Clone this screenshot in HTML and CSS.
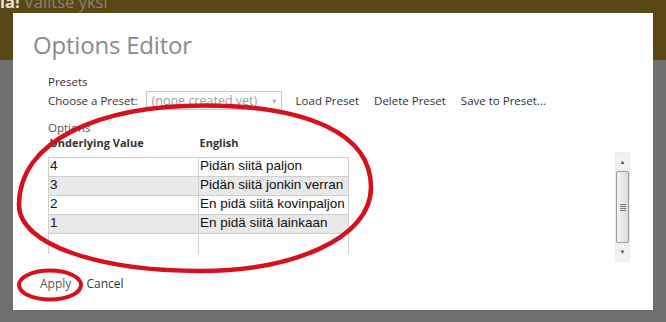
FILE: index.html
```html
<!DOCTYPE html>
<html lang="en">
<head>
  <meta charset="UTF-8" />
  <title>Options Editor</title>
  <link rel="stylesheet" href="styles.css">
</head>
<body>
  <div class="topbar">
    <span class="crumb"><b>ia!</b> Valitse yksi</span>
  </div>

  <!-- modal dialog -->
  <div class="modal">
    <h1>Options Editor</h1>

    <div class="section">
      <div class="label">Presets</div>
      <div class="preset-row">
        <span>Choose a Preset:</span>
        <div class="fake-select">
          <span>(none created yet)</span>
          <span class="caret">&#9662;</span>
        </div>
        <a class="preset-link load">Load Preset</a>
        <a class="preset-link">Delete Preset</a>
        <a class="preset-link">Save to Preset...</a>
      </div>

      <div class="label options-label">Options</div>
      <div class="grid-wrap">
        <table class="opt-table">
          <thead>
            <tr><th>Underlying Value</th><th>English</th></tr>
          </thead>
          <tbody>
            <tr><td>4</td><td>Pidän siitä paljon</td></tr>
            <tr class="alt"><td>3</td><td>Pidän siitä jonkin verran</td></tr>
            <tr><td>2</td><td>En pidä siitä kovinpaljon</td></tr>
            <tr class="alt"><td>1</td><td>En pidä siitä lainkaan</td></tr>
            <tr class="blank"><td></td><td></td></tr>
          </tbody>
        </table>

        <div class="scrollbar">
          <div class="sb-btn">&#9650;</div>
          <div class="sb-thumb"><span class="grip"></span></div>
          <div class="sb-btn">&#9660;</div>
        </div>
      </div>
    </div>

    <div class="actions">
      <a class="apply">Apply</a>
      <a class="cancel">Cancel</a>
    </div>
  </div>

  <!-- red annotation marks drawn over the screenshot -->
  <svg class="marks" width="666" height="322" viewBox="0 0 666 322">
    <path d="M 205 105.5 C 310 105.5, 371 135, 371 187 C 371 240, 290 271, 200 271 C 100 271, 19 245, 19 205 C 19 140, 100 105.5, 205 105.5 Z" fill="none" stroke="#d4111c" stroke-width="4.5" />
    <ellipse cx="50" cy="285" rx="31" ry="14.5" fill="none" stroke="#d4111c" stroke-width="4" />
  </svg>
</body>
</html>
```

FILE: styles.css
```css
body {
  margin: 0;
  background: #6f6f6f;
  font-family: "Open Sans", "Liberation Sans", sans-serif;
  color: #333;
  width: 666px;
  height: 322px;
  overflow: hidden;
  position: relative;
}
.topbar {
  height: 70px;
  background: #5a4716;
}
.crumb {
  display: block;
  margin-top: -10px;
  padding-left: 0;
  font-size: 16.5px;
  color: #8c8468;
}
.crumb b {
  color: #e8e3d2;
}
.modal {
  position: absolute;
  left: 13px;
  top: 13px;
  width: 640px;
  height: 297px;
  background: #fff;
  box-sizing: border-box;
  padding: 0 20px;
}
h1 {
  margin: 16px 0 0;
  font-size: 24px;
  font-weight: 400;
  color: #8a8a8a;
  line-height: 32px;
  letter-spacing: -0.2px;
}
.section {
  margin: 13px 0 0 15px;
  font-size: 11.5px;
}
.label {
  line-height: 16px;
}
.preset-row {
  display: flex;
  align-items: center;
  height: 20px;
}
.fake-select {
  display: flex;
  justify-content: space-between;
  align-items: center;
  width: 136px;
  height: 19px;
  margin-left: 8px;
  padding: 0 4px 0 5px;
  box-sizing: border-box;
  border: 1px solid #c8c8c8;
  color: #a0a0a0;
  font-size: 12.5px;
}
.caret {
  font-size: 9px;
  color: #b5b5b5;
}
.preset-link {
  margin-left: 15px;
  color: #333;
}
.preset-link.load {
  margin-left: 14px;
}
.options-label {
  margin-top: 10px;
  color: #555;
}
.grid-wrap {
  display: flex;
  align-items: flex-start;
  margin-top: 0;
}
.opt-table {
  border-collapse: collapse;
  font-family: "Liberation Sans", Arial, sans-serif;
  font-size: 13.5px;
}
.opt-table th {
  text-align: left;
  font-family: "Open Sans", sans-serif;
  font-size: 11px;
  font-weight: 700;
  color: #333;
  padding: 0 0 0 1px;
  height: 21px;
  line-height: 14px;
  vertical-align: top;
}
.opt-table td {
  width: 148px;
  height: 18px;
  padding: 0 0 0 1px;
  border: 1px solid #cfcfcf;
  color: #111;
  line-height: 16px;
  vertical-align: top;
}
.opt-table tr.alt td {
  background: #e9e9e9;
}
.opt-table tr.blank td {
  height: 20px;
  border-bottom: none;
}
.scrollbar {
  margin-left: auto;
  margin-right: 3px;
  margin-top: 16px;
  width: 15px;
  height: 110px;
  flex-shrink: 0;
  background: #f2f2f2;
  border: 1px solid #ececec;
  box-sizing: border-box;
  display: flex;
  flex-direction: column;
}
.sb-btn {
  height: 18px;
  font-size: 6px;
  color: #555;
  text-align: center;
  line-height: 18px;
}
.sb-thumb {
  flex: 1;
  border: 1px solid #9a9a9a;
  border-radius: 2px;
  background: linear-gradient(to right, #f4f4f4, #dcdcdc);
  display: flex;
  align-items: center;
  justify-content: center;
}
.grip {
  width: 6px;
  height: 7px;
  background: repeating-linear-gradient(to bottom, #777 0 1px, transparent 1px 2px);
}
.actions {
  position: absolute;
  left: 27px;
  top: 262px;
  font-size: 12px;
}
.apply {
  color: #555;
}
.cancel {
  margin-left: 12px;
  color: #333;
}
.marks {
  position: absolute;
  left: 0;
  top: 0;
  pointer-events: none;
}
```
